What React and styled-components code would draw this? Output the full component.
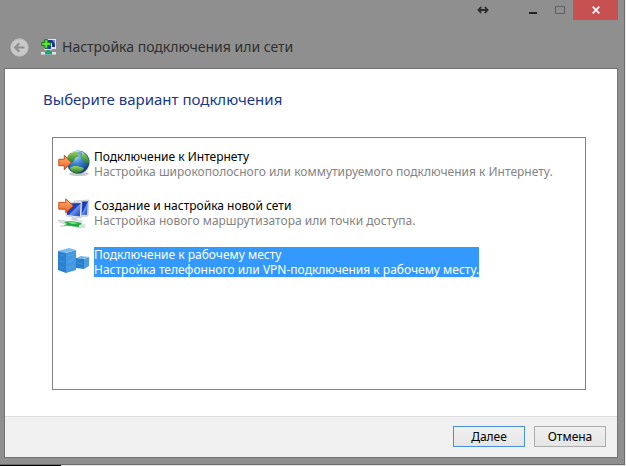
import { useState } from "react";
import styled, { createGlobalStyle } from "styled-components";

const GlobalStyle = createGlobalStyle`
  * {
    box-sizing: border-box;
  }
  body {
    margin: 0;
    background: linear-gradient(90deg, #000 61px, #e6e6e6 61px) bottom / 100% 1px no-repeat, #ececec;
  }
  body, button {
    font-family: "Noto Sans", "Open Sans", sans-serif;
    font-size: 12px;
  }
`;

const Page = styled.div`
  min-height: 100vh;
  display: flex;
  padding: 0 1px 1px 0;
`;
const Window = styled.div`
  flex: 1;
  min-width: 0;
  display: flex;
  flex-direction: column;
  padding: 0 6px 6px 4px;
  background-color: #8f8f8f;
  border-right: 1px solid #6c6c6c;
  border-bottom: 1px solid #6c6c6c;
`;
const TitleBar = styled.div`
  height: 20px;
  display: flex;
  justify-content: flex-end;
`;
const ResizeMark = styled.span`
  display: flex;
  align-items: center;
  margin-right: 30px;
`;
const WindowButton = styled.button`
  width: ${(props) => (props.$close ? "45px" : "27px")};
  height: 20px;
  padding: 0;
  border: none;
  display: flex;
  justify-content: center;
  align-items: center;
  background-color: ${(props) => (props.$close ? "#c75050" : "transparent")};
`;
const Header = styled.header`
  height: 48px;
  padding: 6px 0 0 6px;
  display: flex;
  align-items: center;
`;
const BackButton = styled.button`
  width: 19px;
  height: 19px;
  padding: 0;
  border: none;
  border-radius: 50%;
  display: flex;
  background: transparent;
`;
const HeaderIcon = styled.span`
  display: flex;
  margin: 0 6px 0 12px;
`;
const Title = styled.h1`
  margin: 0;
  font-size: 14px;
  line-height: 20px;
  font-weight: 400;
  color: #303030;
`;
const Panel = styled.main`
  flex: 1;
  display: flex;
  flex-direction: column;
  background-color: #fff;
  border: 1px solid #747474;
`;
const Content = styled.section`
  flex: 1;
  display: flex;
  flex-direction: column;
  padding: 20px 31px 26px 38px;
`;
const Heading = styled.h2`
  margin: 0 0 28px;
  font-size: 15px;
  line-height: 20px;
  font-weight: 400;
  color: #17388c;
`;
const List = styled.ul`
  flex: 1;
  margin: 0 0 0 9px;
  padding: 11px 5px;
  list-style: none;
  border: 1px solid #828282;
  display: flex;
  flex-direction: column;
  gap: 17px;
`;
const Option = styled.button`
  display: flex;
  align-items: flex-start;
  gap: 4px;
  padding: 0;
  border: none;
  background: transparent;
  text-align: left;
  line-height: 15px;
  height: 32px;
`;
const OptionText = styled.span`
  display: flex;
  flex-direction: column;
  white-space: nowrap;
  color: ${(props) => (props.$selected ? "#fff" : "#000")};
  background-color: ${(props) => (props.$selected ? "#3399ff" : "transparent")};
`;
const OptionDesc = styled.span`
  color: ${(props) => (props.$selected ? "#fff" : "#838383")};
`;
const Footer = styled.footer`
  display: flex;
  justify-content: flex-end;
  gap: 9px;
  padding: 9px 11px 10px;
  background-color: #f0f0f0;
  border-top: 1px solid #dfdfdf;
`;
const Button = styled.button`
  width: 72px;
  height: 21px;
  padding: 0;
  line-height: 15px;
  color: #000;
  background: linear-gradient(#f0f0f0, #e5e5e5);
  border: 1px solid ${(props) => (props.$primary ? "#4a90d9" : "#acacac")};
`;

const BackIcon = () => (
  <svg width="19" height="19" viewBox="0 0 19 19" fill="none">
    <circle cx="9.5" cy="9.5" r="8.7" fill="#c9c9c9" stroke="#bdbdbd" />
    <path d="M14.5 9.5H5.5M9.3 5.3 5.2 9.5l4.1 4.2" stroke="#8f8f8f" strokeWidth="2.2" />
  </svg>
);

const SetupIcon = () => (
  <svg width="15" height="16" viewBox="0 0 15 16">
    <path d="M6 0h9v10H6z" fill="#e4e8ee" />
    <path d="M7 1h7v7H7z" fill="#1c3296" />
    <path d="M11 1h3v4z" fill="#6f8ce0" />
    <path d="M3.5 4.5h7v6h-7z" fill="#233fa8" stroke="#dfe5ef" />
    <path d="M3.7.7h3v2.8h2.8v3H6.7v2.8h-3V6.5H.7v-3h3z" fill="#5ee03a" stroke="#13800f" />
    <path d="M6 11h3v2H6z" fill="#17a974" />
    <path d="M0 13h15v2.6H0z" fill="#dedede" />
    <path d="M4 12.4h7v3H4z" fill="#16a673" />
  </svg>
);

const ResizeIcon = () => (
  <svg width="12" height="8" viewBox="0 0 12 8" fill="none" stroke="#2b2b2b" strokeWidth="1.8">
    <path d="M1 4h10M4.2 1 1.4 4l2.8 3M7.8 1l2.8 3-2.8 3" />
  </svg>
);

const MinimizeIcon = () => (
  <svg width="10" height="8" viewBox="0 0 10 8">
    <path d="M1 6h8v2H1z" fill="#222" />
  </svg>
);

const MaximizeIcon = () => (
  <svg width="10" height="8" viewBox="0 0 10 8">
    <path d="M.5.5h9v7h-9z" fill="none" stroke="#5f5f5f" />
  </svg>
);

const CloseIcon = () => (
  <svg width="8" height="8" viewBox="0 0 8 8">
    <path d="m.7.7 6.6 6.6M7.3.7.7 7.3" stroke="#fff" strokeWidth="1.7" />
  </svg>
);

const GlobeIcon = () => (
  <svg width="32" height="32" viewBox="0 0 32 32">
    <defs>
      <radialGradient id="sea" cx=".4" cy=".25" r=".8">
        <stop offset="0" stopColor="#b4dcfa" />
        <stop offset=".4" stopColor="#3f86d4" />
        <stop offset="1" stopColor="#0c2f7c" />
      </radialGradient>
      <linearGradient id="land" x2="0" y2="1">
        <stop offset="0" stopColor="#9cd65c" />
        <stop offset="1" stopColor="#207a2c" />
      </linearGradient>
      <linearGradient id="arrow" x2="0" y2="1">
        <stop offset="0" stopColor="#ffb077" />
        <stop offset="1" stopColor="#ef6420" />
      </linearGradient>
    </defs>
    <ellipse cx="21" cy="25" rx="10" ry="2" fill="#c9c9c9" />
    <circle cx="20" cy="13" r="11.5" fill="url(#sea)" />
    <path d="M10 7c3-5 7-5 11-5l-1 3 1 2-4 2-2 4-5 1-1-2c0-2 0-3 1-5z" fill="url(#land)" />
    <path d="m24 3 4 3c2 3 3 5 3 8l-3 1-2-3-3-2 1-3z" fill="url(#land)" />
    <path d="M12 19c3-3 8-2 11-1l3 1c-1 3-4 5-8 5-3 0-5-2-6-5z" fill="url(#land)" />
    <path d="M13 4c4-3 10-2 13 1" fill="none" stroke="#dff4ff" strokeWidth="1.2" opacity=".6" />
    <path d="M.8 10.3h5.5V6.2l6.9 7.3-6.9 7.3v-4.1H.8z" fill="url(#arrow)" stroke="#c84c18" />
  </svg>
);

const NewNetworkIcon = () => (
  <svg width="32" height="32" viewBox="0 0 32 32">
    <defs>
      <linearGradient id="screen" x2="1" y2="1">
        <stop offset="0" stopColor="#0b2597" />
        <stop offset=".5" stopColor="#1b48c8" />
        <stop offset=".52" stopColor="#6e97ee" />
        <stop offset="1" stopColor="#1736a8" />
      </linearGradient>
    </defs>
    <path d="m16 3 15-1-1 16-12 1z" fill="#e3e8f0" stroke="#b3bac8" strokeWidth=".6" />
    <path d="m24 3.6 6-.4-1 13.6-6 .5z" fill="url(#screen)" />
    <path d="m8 5 16-1-1 16-15-2z" fill="#eef1f6" stroke="#b3bac8" strokeWidth=".6" />
    <path d="M9 5.6 22.8 5l-1 13.6L9 16.9z" fill="url(#screen)" />
    <path d="m14 19 5 1 1 2 6 1-3 1-10-2z" fill="#cfd4db" />
    <path d="m0 22 9 1 8 3 9 1 1 2-6 1-10-3-10-3z" fill="#e1e4e6" stroke="#bcc1c4" strokeWidth=".6" />
    <path d="m6 24 8-1 10 2-3 4-8-1-8-.5 4-1.5z" fill="#20ad42" />
    <path d="m10 24 5-.5 5 2-6 .5z" fill="#7de284" />
    <path d="m3 27 5 1-1 1H2zm18 0 6-1v4h-6z" fill="#dadddf" />
    <path d="M.8 4.4h7V.8l7.4 7-7.4 7v-3.6h-7z" fill="url(#arrow)" stroke="#c84c18" />
  </svg>
);

const WorkplaceIcon = () => (
  <svg width="32" height="32" viewBox="0 0 32 32">
    <path d="m0 4 11-3 7 2-11 3z" fill="#79bcf0" />
    <path d="m0 4 8 2v20l-8-3z" fill="#2b80cf" />
    <path d="m8 6 10-3v20L8 26z" fill="#4499e0" />
    <path d="m18 11 5-2 8 1-6 2z" fill="#73b8ee" />
    <path d="m18 11 8 1v10l-8-1z" fill="#2a7fcb" />
    <path d="m26 12 5-2v9l-5 3z" fill="#4b9de0" />
    <path
      d="M2 8l4 1M2 14l4 1M2 20l4 1M10 9l6-2M10 15l6-2M10 21l6-2M19 16l5 1"
      stroke="#83c2f3"
      strokeWidth=".8"
      opacity=".35"
    />
  </svg>
);

const options = [
  {
    id: "internet",
    icon: GlobeIcon,
    title: "Подключение к Интернету",
    desc: "Настройка широкополосного или коммутируемого подключения к Интернету.",
  },
  {
    id: "network",
    icon: NewNetworkIcon,
    title: "Создание и настройка новой сети",
    desc: "Настройка нового маршрутизатора или точки доступа.",
  },
  {
    id: "workplace",
    icon: WorkplaceIcon,
    title: "Подключение к рабочему месту",
    desc: "Настройка телефонного или VPN-подключения к рабочему месту.",
  },
];

function App() {
  const [selected, setSelected] = useState("workplace");

  return (
    <Page>
      <GlobalStyle />
      <Window>
        <TitleBar>
          <ResizeMark>
            <ResizeIcon />
          </ResizeMark>
          <WindowButton aria-label="Свернуть">
            <MinimizeIcon />
          </WindowButton>
          <WindowButton aria-label="Развернуть">
            <MaximizeIcon />
          </WindowButton>
          <WindowButton $close aria-label="Закрыть">
            <CloseIcon />
          </WindowButton>
        </TitleBar>
        <Header>
          <BackButton aria-label="Назад">
            <BackIcon />
          </BackButton>
          <HeaderIcon>
            <SetupIcon />
          </HeaderIcon>
          <Title>Настройка подключения или сети</Title>
        </Header>
        <Panel>
          <Content>
            <Heading>Выберите вариант подключения</Heading>
            <List>
              {options.map(({ id, icon: Icon, title, desc }) => (
                <li key={id}>
                  <Option aria-pressed={selected === id} onClick={() => setSelected(id)}>
                    <Icon />
                    <OptionText $selected={selected === id}>
                      <span>{title}</span>
                      <OptionDesc $selected={selected === id}>{desc}</OptionDesc>
                    </OptionText>
                  </Option>
                </li>
              ))}
            </List>
          </Content>
          <Footer>
            <Button $primary>Далее</Button>
            <Button>Отмена</Button>
          </Footer>
        </Panel>
      </Window>
    </Page>
  );
}

export default App;
